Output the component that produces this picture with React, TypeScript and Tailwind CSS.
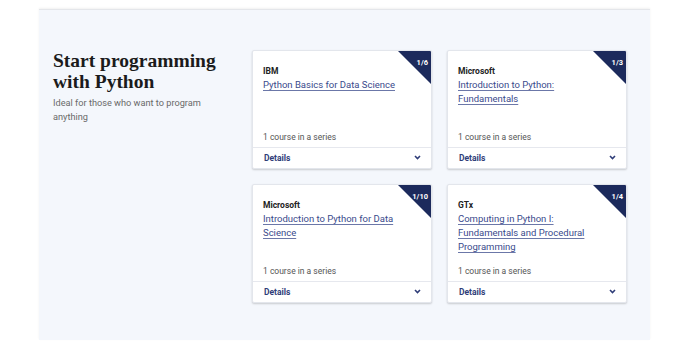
import React from "react";

type Course = { org: string; title: string; badge: string };

const courses: Course[] = [
  { org: "IBM", title: "Python Basics for Data Science", badge: "1/6" },
  { org: "Microsoft", title: "Introduction to Python: Fundamentals", badge: "1/3" },
  { org: "Microsoft", title: "Introduction to Python for Data Science", badge: "1/10" },
  { org: "GTx", title: "Computing in Python I: Fundamentals and Procedural Programming", badge: "1/4" },
];

function Card({ c }: { c: Course }) {
  return (
    <div className="relative flex h-[119px] w-[180px] flex-col overflow-hidden rounded-[2px] border border-[#e3e6ec] bg-white shadow-[0_1px_2px_rgba(0,0,0,0.18)]">
      <div className="absolute right-0 top-0 h-[33px] w-[33px] bg-[#1c2a5c] [clip-path:polygon(0_0,100%_0,100%_100%)]" />
      <div className="absolute right-[3px] top-[8px] text-[7.5px] font-bold leading-none text-white">{c.badge}</div>
      <div className="flex flex-1 flex-col px-[10px] pt-[14px] pb-[4px]">
        <div className="text-[8.5px] font-bold leading-[12px] text-[#222]">{c.org}</div>
        <a className="mt-[1px] w-[150px] text-[9.5px] leading-[14px] text-[#3a4a8c] underline decoration-[#6b77a8] underline-offset-[1.5px]">
          {c.title}
        </a>
        <div className="mt-auto text-[8.5px] leading-[12px] text-[#555]">1 course in a series</div>
      </div>
      <div className="flex h-[21px] items-center justify-between border-t border-[#e6e8ee] pl-[11px] pr-[10px]">
        <span className="mt-[1px] text-[8.5px] font-bold text-[#2f3d78]">Details</span>
        <svg width="7" height="5" viewBox="0 0 7 5" className="mb-[2px]">
          <path d="M1 1 L3.5 3.5 L6 1" fill="none" stroke="#2f3d78" strokeWidth="1.6" />
        </svg>
      </div>
    </div>
  );
}

export default function App() {
  return (
    <div className="h-[350px] w-[688px] bg-white pt-[9px] font-['Roboto',sans-serif]">
      <div className="ml-[39px] h-[331px] w-[611px] border-t border-[#e4e6ea] bg-[#f4f7fc] shadow-[0_-1px_2px_rgba(0,0,0,0.06)]">
        <div className="flex pt-[40px] pl-[14px]">
          <div className="w-[199px]">
            <h2 className="text-[19.5px] font-bold leading-[21px] text-[#1b1b1b] font-['Liberation_Serif',serif]">
              Start programming
              <br />
              with Python
            </h2>
            <p className="mt-[4px] w-[155px] text-[9.2px] leading-[14px] text-[#6a6a6a]">
              Ideal for those who want to program anything
            </p>
          </div>
          <div className="grid grid-cols-[180px_180px] gap-x-[15px] gap-y-[15px]">
            {courses.map((c, i) => (
              <Card key={i} c={c} />
            ))}
          </div>
        </div>
      </div>
    </div>
  );
}
